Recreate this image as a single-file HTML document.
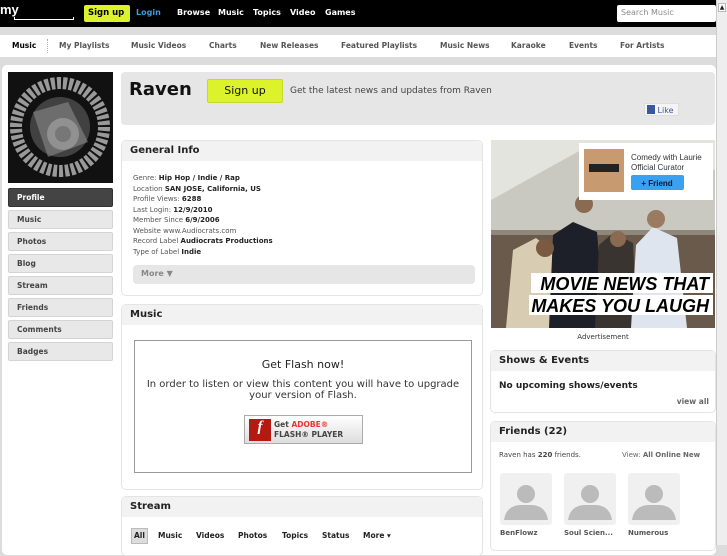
<!DOCTYPE html>
<html><head><meta charset="utf-8">
<style>
*{box-sizing:border-box;margin:0;padding:0}
body{width:727px;height:545px;overflow:hidden;background:#dcdcdc;font-family:"DejaVu Sans","Liberation Sans",sans-serif;position:relative;font-size:8px;color:#222}
.a{position:absolute}
.top{left:0;top:0;width:716px;height:27px;background:#000}
.top b{color:#fff;font-size:8px;position:absolute;top:8px}
.nav{left:0;top:35px;width:716px;height:22px;background:#fff}
.nav span{position:absolute;top:6px;font-size:7.5px;font-weight:bold;color:#555}
.main{left:2px;top:65px;width:714px;height:490px;background:#fff;border-radius:5px}
.side{left:8px;width:105px;height:19px;background:#e8e8e8;border:1px solid #d4d4d4;border-radius:2px;font-weight:bold;font-size:7.5px;color:#444;padding:4px 8px}
.panel{background:#fff;border:1px solid #e4e4e4;border-radius:5px}
.ph{background:#f2f2f2;height:20px;font-weight:bold;font-size:10px;padding:4px 8px;color:#222;border-radius:5px 5px 0 0}
.gi{font-size:7px;line-height:10.5px;color:#555}
.gi b{color:#222}
.av{width:52px;height:52px;background:#f0f0f0;border-radius:3px;overflow:hidden}
.sb{left:716px;top:0;width:11px;height:545px;background:#eee;border-left:1px solid #ccc}
</style></head><body>
<div class="a top">
 <div class="a" style="left:0;top:2px;color:#fff;font-weight:bold;font-size:13px;font-family:'Liberation Sans',sans-serif">my</div>
 <div class="a" style="left:14px;top:17px;width:60px;height:3px;border:1px solid #fff;border-top:none"></div>
 <div class="a" style="left:84px;top:5px;width:46px;height:17px;background:#dcf22a;border-radius:2px;font-weight:bold;font-size:8.5px;padding:3px 4px;color:#000">Sign up</div>
 <b style="left:136px;color:#3b9de0">Login</b>
 <b style="left:177px">Browse</b><b style="left:218px">Music</b><b style="left:253px">Topics</b><b style="left:290px">Video</b><b style="left:325px">Games</b>
 <div class="a" style="left:617px;top:5px;width:99px;height:17px;background:#fff;border-radius:2px;color:#888;font-size:8px;padding:3px 4px">Search Music</div>
</div>
<div class="a nav">
 <span style="left:12px;color:#000">Music</span>
 <div class="a" style="left:47px;top:4px;height:14px;border-left:1px dotted #aaa"></div>
 <span style="left:59px">My Playlists</span><span style="left:131px">Music Videos</span><span style="left:209px">Charts</span><span style="left:260px">New Releases</span><span style="left:341px">Featured Playlists</span><span style="left:440px">Music News</span><span style="left:511px">Karaoke</span><span style="left:569px">Events</span><span style="left:620px">For Artists</span>
</div>
<div class="a main"></div>
<svg class="a" style="left:8px;top:72px" width="105" height="111" viewBox="0 0 105 111"><rect width="105" height="111" fill="#111"/><circle cx="52" cy="55" r="44" fill="none" stroke="#999" stroke-width="12" stroke-dasharray="4 2"/><circle cx="52" cy="55" r="30" fill="#555" opacity=".7"/><circle cx="55" cy="62" r="16" fill="#888"/><circle cx="55" cy="62" r="8" fill="#555"/><path d="M25 40 L60 30 L80 70 L40 85Z" fill="#999" opacity=".5"/></svg>
<div class="a side" style="top:188px;background:#444;color:#fff;border-color:#333">Profile</div>
<div class="a side" style="top:210px">Music</div>
<div class="a side" style="top:232px">Photos</div>
<div class="a side" style="top:254px">Blog</div>
<div class="a side" style="top:276px">Stream</div>
<div class="a side" style="top:298px">Friends</div>
<div class="a side" style="top:320px">Comments</div>
<div class="a side" style="top:342px">Badges</div>

<div class="a" style="left:121px;top:72px;width:594px;height:53px;background:#e6e6e6;border-radius:4px"></div>
<div class="a" style="left:129px;top:79px;font-size:18px;font-weight:bold;color:#111">Raven</div>
<div class="a" style="left:207px;top:79px;width:76px;height:24px;background:#dcf22a;border:1px solid #c8d82a;border-radius:2px;font-size:11px;text-align:center;padding-top:4px;color:#111">Sign up</div>
<div class="a" style="left:290px;top:86px;font-size:9px;color:#444">Get the latest news and updates from Raven</div>
<div class="a" style="left:644px;top:103px;width:35px;height:13px;background:#f4f4f4;border:1px solid #ddd;font-size:8px;color:#3b5998;padding:1px 2px"><span style="display:inline-block;width:8px;height:9px;background:#3b5998;vertical-align:-1px"></span> Like</div>

<div class="a panel" style="left:121px;top:140px;width:362px;height:156px">
 <div class="ph">General Info</div>
 <div class="gi" style="padding:12px 11px 0">Genre: <b>Hip Hop / Indie / Rap</b><br>Location <b>SAN JOSE, California, US</b><br>Profile Views: <b>6288</b><br>Last Login: <b>12/9/2010</b><br>Member Since <b>6/9/2006</b><br>Website www.Audiocrats.com<br>Record Label <b>Audiocrats Productions</b><br>Type of Label <b>Indie</b></div>
 <div class="a" style="left:11px;top:124px;width:342px;height:19px;background:#e6e6e6;border-radius:4px;font-weight:bold;color:#888;font-size:8px;padding:4px 8px">More ▼</div>
</div>
<div class="a panel" style="left:121px;top:304px;width:362px;height:186px">
 <div class="ph">Music</div>
 <div class="a" style="left:12px;top:35px;width:338px;height:133px;border:1px solid #999;text-align:center">
  <div style="font-size:11px;margin-top:17px;color:#222">Get Flash now!</div>
  <div style="font-size:10px;line-height:11px;margin-top:8px;color:#333">In order to listen or view this content you will have to upgrade<br>your version of Flash.</div>
  <div class="a" style="left:109px;top:74px;width:119px;height:29px;background:linear-gradient(#fff,#ddd);border:1px solid #aaa;text-align:left">
   <div class="a" style="left:4px;top:3px;width:22px;height:22px;background:#b51a12;color:#fff;font-style:italic;font-weight:bold;font-size:15px;text-align:center;font-family:'Liberation Serif',serif">f</div>
   <div class="a" style="left:29px;top:4px;font-size:7.5px;font-weight:bold;color:#444;line-height:10px">Get <span style="color:#e33">ADOBE®</span><br>FLASH® PLAYER</div>
  </div>
 </div>
</div>
<div class="a panel" style="left:121px;top:496px;width:362px;height:60px">
 <div class="ph">Stream</div>
 <div class="a" style="left:9px;top:31px;width:17px;height:16px;background:#ddd;border:1px solid #bbb"></div>
 <div class="a" style="left:12px;top:34px;font-weight:bold;font-size:7.5px;color:#222">All</div>
 <div class="a" style="left:36px;top:34px;font-weight:bold;font-size:7.5px;color:#222">Music</div>
 <div class="a" style="left:74px;top:34px;font-weight:bold;font-size:7.5px;color:#222">Videos</div>
 <div class="a" style="left:116px;top:34px;font-weight:bold;font-size:7.5px;color:#222">Photos</div>
 <div class="a" style="left:160px;top:34px;font-weight:bold;font-size:7.5px;color:#222">Topics</div>
 <div class="a" style="left:200px;top:34px;font-weight:bold;font-size:7.5px;color:#222">Status</div>
 <div class="a" style="left:241px;top:34px;font-weight:bold;font-size:7.5px;color:#222">More ▾</div>
</div>

<svg class="a" style="left:491px;top:140px" width="224" height="188" viewBox="0 0 224 188">
 <rect width="224" height="188" fill="#8f877a"/><rect width="224" height="90" fill="#c9c9c1"/>
 <path d="M0 60 L90 10 L224 30 L224 0 L0 0Z" fill="#e4e4de"/>
 <rect x="0" y="95" width="224" height="93" fill="#6a5a4c"/>
 <path d="M15 188 L22 110 L45 98 L62 112 L62 188Z" fill="#d8cdb3"/>
 <path d="M58 188 L62 95 L82 82 L106 92 L114 188Z" fill="#1d2028"/>
 <path d="M104 188 L108 105 L122 93 L142 103 L146 188Z" fill="#3a3430"/>
 <path d="M140 188 L145 105 L162 87 L186 98 L196 188Z" fill="#dfe5ee"/>
 <circle cx="54" cy="108" r="9" fill="#7a5a40"/><circle cx="93" cy="64" r="9" fill="#8a6a50"/><circle cx="127" cy="99" r="8" fill="#8a6a50"/><circle cx="165" cy="79" r="9" fill="#9a7a60"/>
 <rect x="88" y="3" width="134" height="57" fill="#fff"/>
 <rect x="93" y="9" width="40" height="43" fill="#c89a70"/><rect x="98" y="24" width="30" height="8" fill="#222"/>
 <text x="140" y="20" font-family="Liberation Sans" font-size="8" fill="#333">Comedy with Laurie</text>
 <text x="140" y="30" font-family="Liberation Sans" font-size="8" fill="#333">Official Curator</text>
 <rect x="140" y="35" width="53" height="15" rx="2" fill="#3aa0f0"/>
 <text x="166" y="46" text-anchor="middle" font-family="Liberation Sans" font-size="8" font-weight="bold" fill="#113">+ Friend</text>
 <rect x="40" y="133" width="182" height="20" fill="#fff"/><rect x="38" y="155" width="184" height="20" fill="#fff"/>
 <text x="218" y="150" text-anchor="end" font-family="Liberation Sans" font-size="18" font-weight="bold" font-style="italic" fill="#000">MOVIE NEWS THAT</text>
 <text x="218" y="172" text-anchor="end" font-family="Liberation Sans" font-size="18" font-weight="bold" font-style="italic" fill="#000">MAKES YOU LAUGH</text>
</svg>
<div class="a" style="left:491px;top:333px;width:224px;text-align:center;font-size:7px;color:#333">Advertisement</div>

<div class="a panel" style="left:490px;top:350px;width:226px;height:63px">
 <div class="ph">Shows &amp; Events</div>
 <div style="font-weight:bold;font-size:9px;padding:10px 8px 0">No upcoming shows/events</div>
 <div class="a" style="right:6px;top:46px;font-weight:bold;font-size:7.5px;color:#666">view all</div>
</div>
<div class="a panel" style="left:490px;top:421px;width:226px;height:130px">
 <div class="ph">Friends (22)</div>
 <div class="a" style="left:8px;top:29px;font-size:7px;color:#444">Raven has <b>220</b> friends.</div>
 <div class="a" style="left:131px;top:29px;font-size:7px;color:#666">View: <b>All</b> <b>Online</b> <b>New</b></div>
 <div class="a av" style="left:9px;top:51px"><svg width="52" height="52"><circle cx="26" cy="21" r="9" fill="#bbb"/><path d="M4 47 Q6 33 20 32 L32 32 Q46 33 48 47Z" fill="#bbb"/></svg></div>
 <div class="a av" style="left:73px;top:51px"><svg width="52" height="52"><circle cx="26" cy="21" r="9" fill="#bbb"/><path d="M4 47 Q6 33 20 32 L32 32 Q46 33 48 47Z" fill="#bbb"/></svg></div>
 <div class="a av" style="left:137px;top:51px"><svg width="52" height="52"><circle cx="26" cy="21" r="9" fill="#bbb"/><path d="M4 47 Q6 33 20 32 L32 32 Q46 33 48 47Z" fill="#bbb"/></svg></div>
 <div class="a" style="left:9px;top:107px;font-weight:bold;font-size:7px;color:#555">BenFlowz</div>
 <div class="a" style="left:73px;top:107px;font-weight:bold;font-size:7px;color:#555">Soul Scien...</div>
 <div class="a" style="left:137px;top:107px;font-weight:bold;font-size:7px;color:#555">Numerous</div>
</div>
<div class="a sb"><div style="margin:3px 1px;width:8px;height:9px;background:#fff;border:1px solid #bbb;font-size:6px;text-align:center;line-height:8px">▲</div></div>
</body></html>
